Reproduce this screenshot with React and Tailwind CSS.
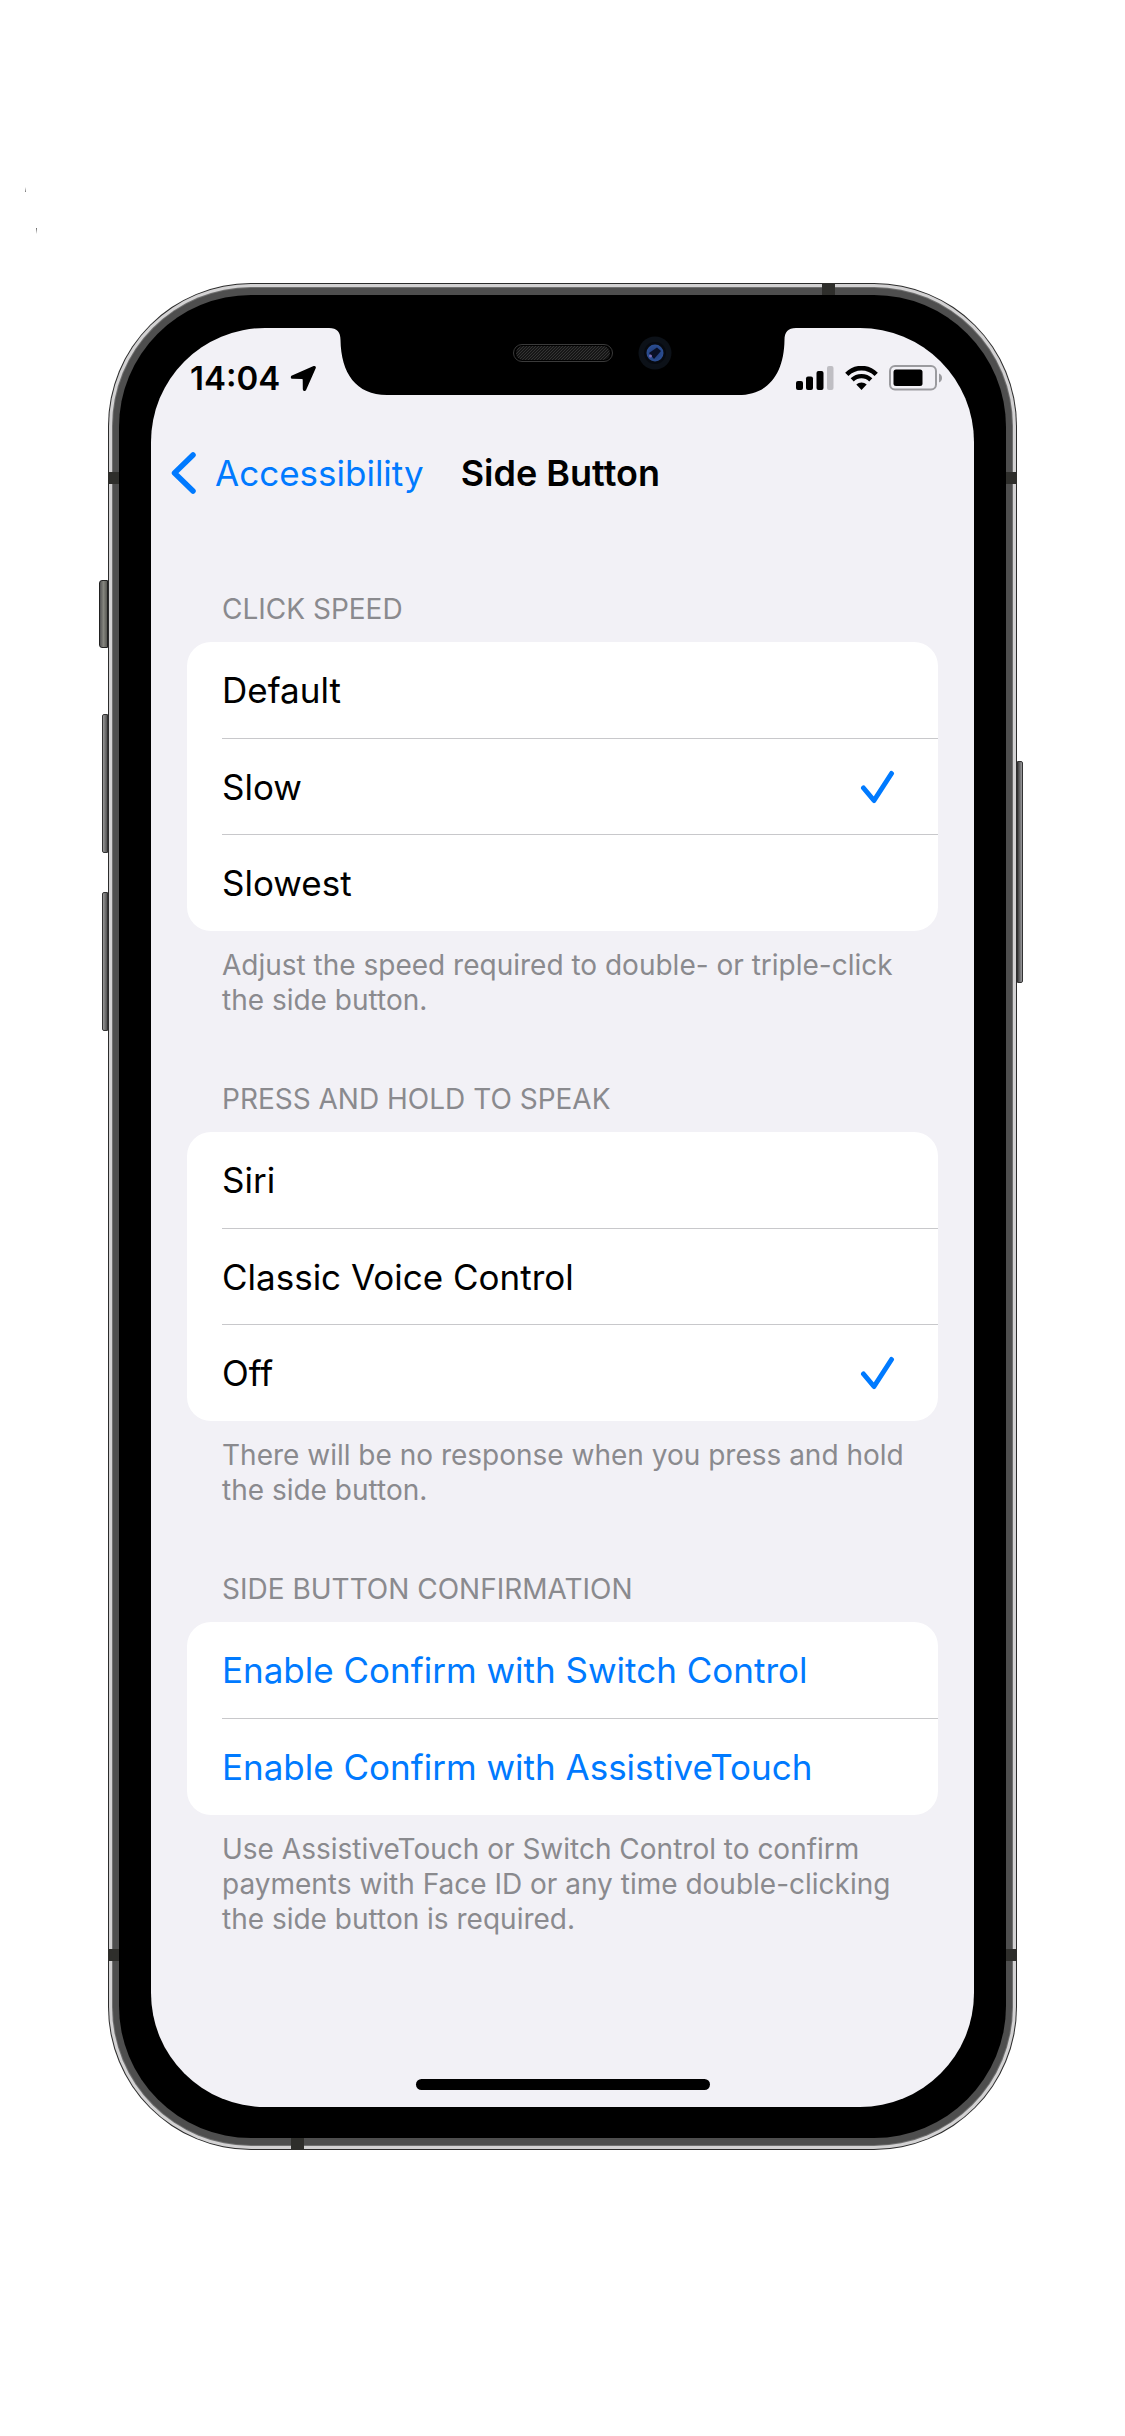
import { useState } from "react";

const groups = [
  {
    id: "click-speed",
    title: "CLICK SPEED",
    options: ["Default", "Slow", "Slowest"],
    initial: "Slow",
    note: ["Adjust the speed required to double- or triple-click", "the side button."],
  },
  {
    id: "press-hold",
    title: "PRESS AND HOLD TO SPEAK",
    options: ["Siri", "Classic Voice Control", "Off"],
    initial: "Off",
    note: ["There will be no response when you press and hold", "the side button."],
  },
];

const confirmActions = [
  "Enable Confirm with Switch Control",
  "Enable Confirm with AssistiveTouch",
];

const confirmNote = [
  "Use AssistiveTouch or Switch Control to confirm",
  "payments with Face ID or any time double-clicking",
  "the side button is required.",
];

function Check() {
  return (
    <svg width="35" height="34" viewBox="0 0 35 34" fill="none" aria-hidden="true">
      <path d="M3.5 18 L14 30.5 L31.5 3.5" stroke="#007aff" strokeWidth="5" strokeLinecap="round" strokeLinejoin="round" />
    </svg>
  );
}

function Section({ id, title, note, children }) {
  return (
    <section aria-labelledby={id} className="flex flex-col">
      <h2 id={id} className="px-[35px] pb-[15px] text-[28px] leading-[35px] whitespace-nowrap text-[#8a8a8e]">
        {title}
      </h2>
      <div className="flex flex-col overflow-hidden rounded-3xl bg-white pb-px">{children}</div>
      <p className="flex flex-col pt-[17px] pl-[35px] text-[28px] leading-[35px] whitespace-nowrap text-[#8a8a8e]">
        {note.map((line) => (
          <span key={line}>{line}</span>
        ))}
      </p>
    </section>
  );
}

function Row({ first, text, checked }) {
  return (
    <span
      className={
        first
          ? "ml-[35px] flex h-24 items-center justify-between pr-[43px]"
          : "ml-[35px] flex h-24 items-center justify-between border-t border-[#c8c8cb] pr-[43px]"
      }
    >
      <span>{text}</span>
      {checked && <Check />}
    </span>
  );
}

function RadioGroup({ group }) {
  const [value, setValue] = useState(group.initial);
  return (
    <Section id={group.id} title={group.title} note={group.note}>
      {group.options.map((option, i) => (
        <label key={option} className="relative cursor-pointer text-[35px] leading-[44px] text-black">
          <input
            type="radio"
            className="sr-only"
            name={group.id}
            checked={value === option}
            onChange={() => setValue(option)}
          />
          <Row first={i === 0} text={option} checked={value === option} />
        </label>
      ))}
    </Section>
  );
}

function StatusBar() {
  return (
    <div className="flex h-[100px] items-center justify-between pr-[31px] pl-[39px]">
      <div className="flex items-center gap-[10px]">
        <span className="text-[33px] leading-[40px] font-semibold">14:04</span>
        <svg width="27" height="27" viewBox="0 0 27 27" aria-hidden="true">
          <path d="M23.6 1.1 L2 10.4 C.2 11.2.5 13.7 2.6 13.8 L12 13.9 C12.5 13.9 12.7 14.1 12.7 14.6 L12.8 24 C12.8 26.3 15.3 26.7 16.2 24.8 L25.7 3.2 C26.4 1.5 25.1.4 23.6 1.1Z" />
        </svg>
      </div>
      <div className="flex items-center gap-[11px]">
        <svg width="38" height="24" viewBox="0 0 38 24" aria-hidden="true">
          <rect x="0" y="15" width="7" height="9" rx="2" />
          <rect x="10" y="10.5" width="7" height="13.5" rx="2" />
          <rect x="20.5" y="5" width="7" height="19" rx="2" />
          <rect x="31" y="0" width="6.5" height="24" rx="2" fill="#bfbec3" />
        </svg>
        <svg width="33" height="24" viewBox="0 0 33 24" fill="none" aria-hidden="true">
          <path d="M1.8 8.3 C10 0 23 0 31.2 8.3" stroke="#000" strokeWidth="4.6" />
          <path d="M7.2 13.9 C12.4 8.8 20.6 8.8 25.8 13.9" stroke="#000" strokeWidth="4.4" />
          <path d="M11.3 18.6 C14.2 15.9 18.8 15.9 21.7 18.6 L16.5 24Z" fill="#000" />
        </svg>
        <svg width="54" height="26" viewBox="0 0 54 26" fill="none" aria-hidden="true">
          <rect x="1" y="1" width="46" height="23.5" rx="5" stroke="#9b9b9f" strokeWidth="2" />
          <rect x="4.5" y="4.5" width="29" height="16.5" rx="2.5" fill="#000" />
          <path d="M50 8.5 C54 10 54 16 50 17.5Z" fill="#9b9b9f" />
        </svg>
      </div>
    </div>
  );
}

function Notch() {
  return (
    <div className="absolute inset-x-0 top-0 flex justify-center" aria-hidden="true">
      <svg width="467" height="68" viewBox="0 0 467 68">
        <defs>
          <pattern id="mesh" width="3" height="3" patternUnits="userSpaceOnUse">
            <rect width="3" height="3" fill="#161616" />
            <path d="M0 3 L3 0" stroke="#343434" strokeWidth="1" />
          </pattern>
          <radialGradient id="lens">
            <stop offset="0" stopColor="#0b1430" />
            <stop offset=".35" stopColor="#223f7e" />
            <stop offset="1" stopColor="#2c4f93" />
          </radialGradient>
        </defs>
        <path d="M0 -1 V0 C8 0 11.5 4 11.5 12 C12 45 27 67 58 67 H409 C440 67 455 45 455.5 12 C455.5 4 459 0 467 0 V-1Z" />
        <rect x="184.5" y="16.5" width="99" height="17" rx="8.5" fill="#000" stroke="#3a3a3a" />
        <rect x="187" y="18" width="94" height="14" rx="7" fill="url(#mesh)" />
        <circle cx="326" cy="25" r="16.5" fill="#0c1118" />
        <circle cx="326" cy="25" r="11" fill="#070a10" />
        <circle cx="326" cy="25" r="8.5" fill="url(#lens)" />
        <path d="M320 25 L328 19.5 L332 23 L325 31Z" fill="#0a1026" />
        <circle cx="321.5" cy="28" r="1.5" fill="#7d6bb5" />
      </svg>
    </div>
  );
}

function Antennas() {
  return (
    <>
      <div className="pointer-events-none absolute inset-0 flex flex-col justify-between py-[189px]" aria-hidden="true">
        {["upper", "lower"].map((pair) => (
          <div key={pair} className="flex justify-between">
            <i className="h-3 w-[11px] bg-[#2e2e2b]" />
            <i className="h-3 w-[11px] bg-[#2e2e2b]" />
          </div>
        ))}
      </div>
      <div className="pointer-events-none absolute inset-0 flex flex-col justify-between pr-[182px] pl-[183px]" aria-hidden="true">
        <i className="h-3 w-[13px] self-end bg-[#2e2e2b]" />
        <i className="h-3 w-[13px] self-start bg-[#2e2e2b]" />
      </div>
    </>
  );
}

function SideKeys() {
  return (
    <>
      <div className="absolute inset-y-0 right-full flex flex-col items-end pt-[297px]" aria-hidden="true">
        <i className="mb-[66px] h-[68px] w-[9px] rounded-l-[3px] border border-[#222] bg-linear-to-r from-[#555] via-[#85857e] to-[#5a5a55]" />
        <i className="mb-[39px] h-[139px] w-[6px] rounded-l-[2px] border border-[#333] bg-linear-to-r from-[#999] to-[#555]" />
        <i className="h-[139px] w-[6px] rounded-l-[2px] border border-[#333] bg-linear-to-r from-[#999] to-[#555]" />
      </div>
      <div className="absolute inset-y-0 left-full flex flex-col pt-[478px]" aria-hidden="true">
        <i className="h-[222px] w-[6px] rounded-r-[2px] border border-[#333] bg-linear-to-r from-[#444] to-[#9c9c9f]" />
      </div>
    </>
  );
}

export default function App() {
  return (
    <div className="relative bg-white pt-[283px] pb-[284px] font-[Inter,'Liberation_Sans',sans-serif] text-black">
      <div className="absolute top-0 left-0 flex gap-[10px] pt-[187px] pl-[25px]" aria-hidden="true">
        <i className="h-[5px] w-px bg-linear-to-b from-white to-[#777]" />
        <i className="mt-[41px] h-[6px] w-px bg-linear-to-b from-[#666] to-white" />
      </div>
      <div className="relative mx-auto max-w-[909px]">
        <div className="rounded-[143px] bg-[#2c2c2c] p-px">
          <div className="rounded-[142px] bg-[#d3d2d3] p-[3px]">
            <div className="rounded-[139px] bg-[#707070] p-px">
              <div className="rounded-[138px] bg-[#4e4e4e] px-[6px] py-[7px]">
                <div className="rounded-[132px] bg-black px-[32px] pt-[33px] pb-[31px]">
                  <div className="relative overflow-hidden rounded-[114px] bg-[#f2f1f6]">
                    <Notch />
                    <StatusBar />
                    <header className="flex h-[90px] items-center gap-[37px] pl-[20px] leading-[44px] whitespace-nowrap">
                      <a href="#accessibility" className="flex items-center gap-[19px] text-[35px] text-[#007aff]">
                        <svg width="25" height="42" viewBox="0 0 25 42" fill="none" aria-hidden="true">
                          <path d="M22 3 L3.5 21 L22 39" stroke="#007aff" strokeWidth="5.5" strokeLinecap="round" strokeLinejoin="round" />
                        </svg>
                        Accessibility
                      </a>
                      <h1 className="text-[36px] font-semibold">Side Button</h1>
                    </header>
                    <main className="flex flex-col gap-16 px-[36px] pt-[74px]">
                      {groups.map((group) => (
                        <RadioGroup key={group.id} group={group} />
                      ))}
                      <Section id="confirmation" title="SIDE BUTTON CONFIRMATION" note={confirmNote}>
                        {confirmActions.map((action, i) => (
                          <button key={action} type="button" className="text-left text-[35px] leading-[44px] text-[#007aff]">
                            <Row first={i === 0} text={action} />
                          </button>
                        ))}
                      </Section>
                    </main>
                    <div className="flex justify-center pt-[142px] pb-[17px]">
                      <div className="h-[11px] w-[294px] rounded-full bg-black" />
                    </div>
                  </div>
                </div>
              </div>
            </div>
          </div>
        </div>
        <Antennas />
        <SideKeys />
      </div>
    </div>
  );
}
